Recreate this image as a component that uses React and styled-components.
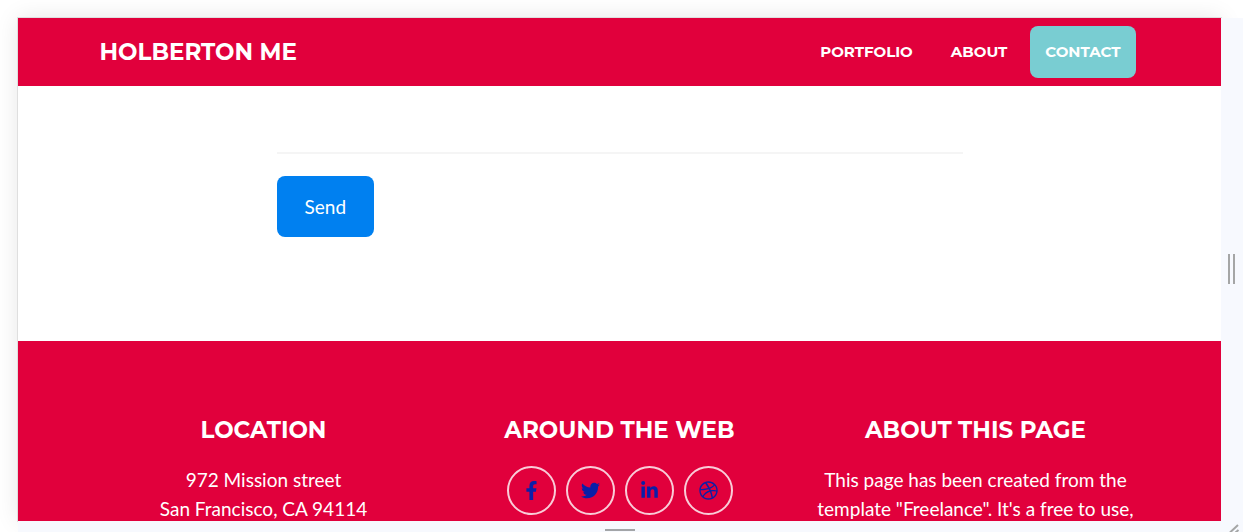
import React from "react";
import styled, { createGlobalStyle, css } from "styled-components";
import { FaFacebookF, FaTwitter, FaLinkedinIn, FaDribbble } from "react-icons/fa";

const GlobalStyle = createGlobalStyle`
  *, *::before, *::after { box-sizing: border-box; }
  body { margin: 0; background: #fff; overflow: hidden; }
`;

const headingFont = css`
  font-family: Montserrat, Inter, sans-serif;
  font-weight: 700;
  text-transform: uppercase;
`;

const Stage = styled.div`
  display: grid;
  grid-template-columns: minmax(0, 1fr) 22px;
  grid-template-rows: minmax(0, 1fr) 11px;
  height: 100vh;
  padding: 18px 2px 0 18px;
  font-family: Lato, sans-serif;
`;

const Viewport = styled.div`
  overflow-y: auto;
  scrollbar-width: none;
  background: #fff;
  box-shadow: 0 0 0 1px #dfdfdf, 0 0 22px rgba(0, 0, 0, 0.1);
`;

const Resizer = styled.div`
  display: flex;
  align-items: ${(p) => (p.$side === "right" ? "center" : "flex-end")};
  justify-content: ${(p) => (p.$side === "corner" ? "flex-end" : "center")};
  padding: ${(p) => (p.$side === "right" ? "0 2px 2px 0" : p.$side === "bottom" ? "0 0 1px" : "0")};
  background: #f7f9fe;
  z-index: 1;
`;

const Grip = styled.span`
  width: ${(p) => (p.$vertical ? 7 : 30)}px;
  height: ${(p) => (p.$vertical ? 30 : 2)}px;
  background: ${(p) => (p.$vertical ? "none" : "#a3a5a8")};
  border: solid #a5a6a6;
  border-width: ${(p) => (p.$vertical ? "0 2px" : "0")};
`;

const Corner = styled.svg`
  display: block;
`;

const Header = styled.header`
  position: sticky;
  top: 0;
  background: #e1003c;
`;

const NavBar = styled.nav`
  display: flex;
  align-items: center;
  justify-content: space-between;
  max-width: 1040px;
  min-height: 68px;
  margin: 0 auto;
`;

const Brand = styled.a`
  ${headingFont}
  font-size: 23px;
  line-height: 32px;
  color: #fff;
  text-decoration: none;
`;

const NavList = styled.ul`
  display: flex;
  gap: 8px;
  margin: 0;
  padding: 0 4px;
  list-style: none;
`;

const NavLink = styled.a`
  ${headingFont}
  display: block;
  padding: 14px 15px;
  border-radius: 8px;
  font-size: 15px;
  line-height: 24px;
  color: #fff;
  text-decoration: none;
  background: ${(p) => (p.$active ? "#79cdd2" : "transparent")};
`;

const Form = styled.form`
  max-width: 686px;
  margin: 0 auto;
  padding: 66px 0 104px;
`;

const Divider = styled.hr`
  height: 2px;
  margin: 0 0 22px;
  border: 0;
  background: #f5f5f5;
`;

const SendButton = styled.button`
  display: block;
  padding: 16px 28px;
  border: 0;
  border-radius: 8px;
  background: #0080f0;
  color: #fff;
  font-family: inherit;
  font-size: 19px;
  line-height: 29px;
`;

const Footer = styled.footer`
  padding: 73px 0;
  background: #e1003c;
  color: #fff;
  text-align: center;
`;

const Columns = styled.div`
  display: grid;
  grid-template-columns: repeat(3, minmax(0, 1fr));
  max-width: 1068px;
  margin: 0 auto;
`;

const Column = styled.section`
  padding: 0 14px;
`;

const Title = styled.h2`
  ${headingFont}
  margin: 0 0 19px;
  font-size: 23px;
  line-height: 32px;
`;

const Text = styled.p`
  margin: 0;
  font-size: 19px;
  line-height: 29px;
`;

const Socials = styled.div`
  display: flex;
  justify-content: center;
  gap: 10px;
  padding-top: 1px;
`;

const SocialLink = styled.a`
  display: flex;
  align-items: center;
  justify-content: center;
  width: 49px;
  height: 49px;
  border: 2px solid rgba(255, 255, 255, 0.8);
  border-radius: 50%;
  color: #0a1fa8;
  font-size: 19px;
`;

const links = ["Portfolio", "About", "Contact"];

const socials = [
  ["Facebook", FaFacebookF],
  ["Twitter", FaTwitter],
  ["LinkedIn", FaLinkedinIn],
  ["Dribbble", FaDribbble],
];

export default function App() {
  return (
    <>
      <GlobalStyle />
      <Stage>
        <Viewport>
          <Header>
            <NavBar>
              <Brand href="#top">Holberton Me</Brand>
              <NavList>
                {links.map((name) => (
                  <li key={name}>
                    <NavLink href={`#${name.toLowerCase()}`} $active={name === "Contact"}>
                      {name}
                    </NavLink>
                  </li>
                ))}
              </NavList>
            </NavBar>
          </Header>
          <Form onSubmit={(e) => e.preventDefault()}>
            <Divider />
            <SendButton type="submit">Send</SendButton>
          </Form>
          <Footer>
            <Columns>
              <Column>
                <Title>Location</Title>
                <Text>
                  972 Mission street
                  <br />
                  San Francisco, CA 94114
                </Text>
              </Column>
              <Column>
                <Title>Around the Web</Title>
                <Socials>
                  {socials.map(([name, Icon]) => (
                    <SocialLink key={name} href={`#${name.toLowerCase()}`} aria-label={name}>
                      <Icon />
                    </SocialLink>
                  ))}
                </Socials>
              </Column>
              <Column>
                <Title>About this page</Title>
                <Text>This page has been created from the template "Freelance". It's a free to use,</Text>
              </Column>
            </Columns>
          </Footer>
        </Viewport>
        <Resizer $side="right">
          <Grip $vertical />
        </Resizer>
        <Resizer $side="bottom">
          <Grip />
        </Resizer>
        <Resizer $side="corner">
          <Corner width="14" height="8" viewBox="0 0 14 8" stroke="#a5a6a6" strokeWidth="2" aria-hidden="true">
            <path d="M1 8.500 9 1M6.500 8.500 9.500 6" />
          </Corner>
        </Resizer>
      </Stage>
    </>
  );
}
